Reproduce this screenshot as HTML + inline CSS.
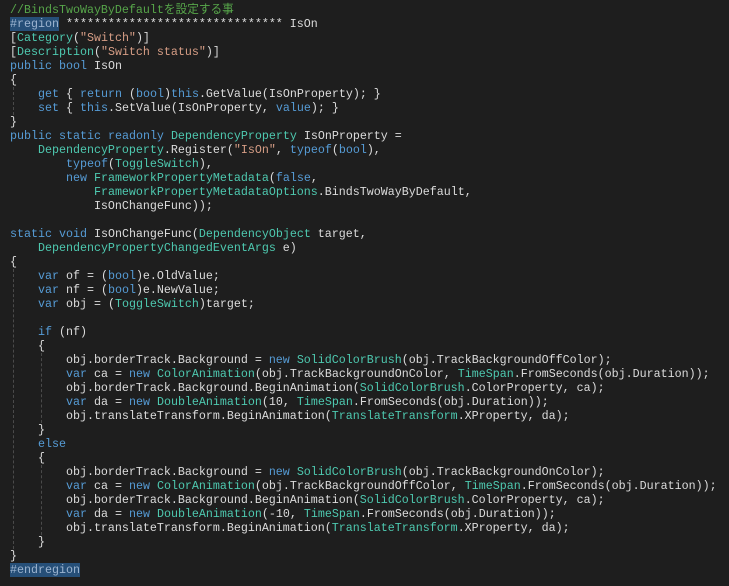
<!DOCTYPE html>
<html><head><meta charset="utf-8"><style>
html,body{margin:0;padding:0;background:#1e1e1e;width:729px;height:586px;overflow:hidden}
pre{margin:0;padding:3px 0 0 10px;font-family:"Liberation Mono","Noto Sans CJK JP",monospace;font-size:11.667px;line-height:14px;color:#dcdcdc;white-space:pre}
.k{color:#569cd6}.t{color:#4ec9b0}.s{color:#d69d85}.c{color:#57a64a}.r{background:#264f78;color:#9cb4d0}
.g{position:absolute;border-left:1px dashed #4a4a4a;width:0}
</style></head><body>
<div class="g" style="left:13px;top:87px;height:28px"></div>
<div class="g" style="left:13px;top:269px;height:280px"></div>
<div class="g" style="left:41px;top:353px;height:70px"></div>
<div class="g" style="left:41px;top:465px;height:70px"></div>
<pre><span class="c">//BindsTwoWayByDefaultを設定する事</span>
<span class="r">#region</span> ******************************* IsOn
[<span class="t">Category</span>(<span class="s">"Switch"</span>)]
[<span class="t">Description</span>(<span class="s">"Switch status"</span>)]
<span class="k">public</span> <span class="k">bool</span> IsOn
{
    <span class="k">get</span> { <span class="k">return</span> (<span class="k">bool</span>)<span class="k">this</span>.GetValue(IsOnProperty); }
    <span class="k">set</span> { <span class="k">this</span>.SetValue(IsOnProperty, <span class="k">value</span>); }
}
<span class="k">public</span> <span class="k">static</span> <span class="k">readonly</span> <span class="t">DependencyProperty</span> IsOnProperty =
    <span class="t">DependencyProperty</span>.Register(<span class="s">"IsOn"</span>, <span class="k">typeof</span>(<span class="k">bool</span>),
        <span class="k">typeof</span>(<span class="t">ToggleSwitch</span>),
        <span class="k">new</span> <span class="t">FrameworkPropertyMetadata</span>(<span class="k">false</span>,
            <span class="t">FrameworkPropertyMetadataOptions</span>.BindsTwoWayByDefault,
            IsOnChangeFunc));

<span class="k">static</span> <span class="k">void</span> IsOnChangeFunc(<span class="t">DependencyObject</span> target,
    <span class="t">DependencyPropertyChangedEventArgs</span> e)
{
    <span class="k">var</span> of = (<span class="k">bool</span>)e.OldValue;
    <span class="k">var</span> nf = (<span class="k">bool</span>)e.NewValue;
    <span class="k">var</span> obj = (<span class="t">ToggleSwitch</span>)target;

    <span class="k">if</span> (nf)
    {
        obj.borderTrack.Background = <span class="k">new</span> <span class="t">SolidColorBrush</span>(obj.TrackBackgroundOffColor);
        <span class="k">var</span> ca = <span class="k">new</span> <span class="t">ColorAnimation</span>(obj.TrackBackgroundOnColor, <span class="t">TimeSpan</span>.FromSeconds(obj.Duration));
        obj.borderTrack.Background.BeginAnimation(<span class="t">SolidColorBrush</span>.ColorProperty, ca);
        <span class="k">var</span> da = <span class="k">new</span> <span class="t">DoubleAnimation</span>(10, <span class="t">TimeSpan</span>.FromSeconds(obj.Duration));
        obj.translateTransform.BeginAnimation(<span class="t">TranslateTransform</span>.XProperty, da);
    }
    <span class="k">else</span>
    {
        obj.borderTrack.Background = <span class="k">new</span> <span class="t">SolidColorBrush</span>(obj.TrackBackgroundOnColor);
        <span class="k">var</span> ca = <span class="k">new</span> <span class="t">ColorAnimation</span>(obj.TrackBackgroundOffColor, <span class="t">TimeSpan</span>.FromSeconds(obj.Duration));
        obj.borderTrack.Background.BeginAnimation(<span class="t">SolidColorBrush</span>.ColorProperty, ca);
        <span class="k">var</span> da = <span class="k">new</span> <span class="t">DoubleAnimation</span>(-10, <span class="t">TimeSpan</span>.FromSeconds(obj.Duration));
        obj.translateTransform.BeginAnimation(<span class="t">TranslateTransform</span>.XProperty, da);
    }
}
<span class="r">#endregion</span></pre>
</body></html>
